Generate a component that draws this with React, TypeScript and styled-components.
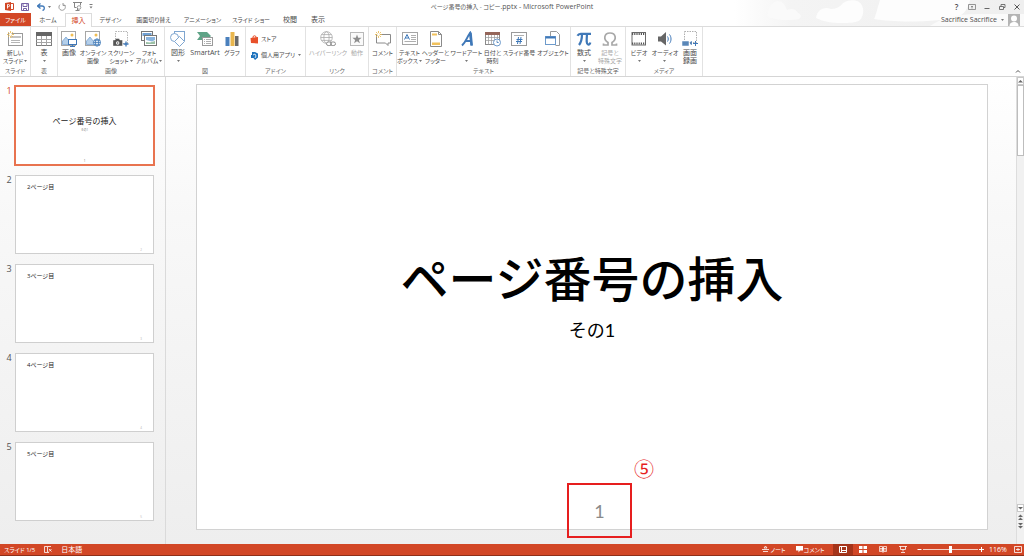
import React from "react";
import styled, { createGlobalStyle, css } from "styled-components";

const ACCENT = "#d24726";
const BLUE = "#3f78b8";
const GREY = "#7c7c7c";

const GlobalStyle = createGlobalStyle`
  *, *::before, *::after { box-sizing: border-box; }
  body {
    margin: 0;
    background: #ffffff;
    color: #4a4a4a;
    font-family: "Open Sans", "Noto Sans CJK JP", sans-serif;
    font-size: 7px;
    line-height: 8px;
    font-feature-settings: "palt", "kern";
  }
  button {
    font: inherit;
    font-feature-settings: inherit;
    color: inherit;
    margin: 0;
    padding: 0;
    border: 0;
    background: none;
  }
  h1, h2, p, ol { margin: 0; padding: 0; font-weight: 400; }
  svg { display: block; flex: none; }
`;

const Window = styled.div`
  min-height: 100vh;
  display: flex;
  flex-direction: column;
`;

/* ---------- title bar and tabs ---------- */

const Head = styled.header`
  position: relative;
  border-bottom: 1px solid #dcdcdc;
`;

const Clouds = styled.svg`
  position: absolute;
  top: 0;
  right: 0;
`;

const TitleBar = styled.div`
  position: relative;
  display: grid;
  grid-template-columns: 1fr auto 1fr;
  align-items: center;
  height: 13px;
`;

const QuickAccess = styled.div`
  display: flex;
  align-items: center;
  gap: 7px;
  padding-left: 5px;
`;

const WindowTitle = styled.h1`
  font-size: 7px;
  line-height: 12px;
  color: #555555;
  white-space: nowrap;
`;

const DocumentName = styled.span`
  font-size: 6px;
`;

const WindowButtons = styled.div`
  display: flex;
  justify-content: flex-end;
  align-items: center;
  gap: 7px;
  padding-right: 3px;
`;

const IconButton = styled.button`
  display: flex;
  align-items: center;
  justify-content: center;
`;

const HelpButton = styled(IconButton)`
  width: 9px;
  font-size: 8px;
  font-weight: 600;
`;

const TabRow = styled.nav`
  position: relative;
  display: flex;
  height: 13px;
`;

const Tab = styled.button<{ $w: number; $kind?: "file" | "active" }>`
  flex: none;
  width: ${(p) => p.$w}px;
  height: 13px;
  display: flex;
  align-items: center;
  justify-content: center;
  white-space: nowrap;
  font-size: ${(p) => (p.$w > 30 ? 6 : 7)}px;
  ${(p) =>
    p.$kind === "file" &&
    css`
      background: ${ACCENT};
      color: #ffffff;
    `}
  ${(p) =>
    p.$kind === "active" &&
    css`
      height: 14px;
      background: #ffffff;
      color: ${ACCENT};
      border: 1px solid #dcdcdc;
      border-bottom: 0;
    `}
`;

const Account = styled.button`
  margin-left: auto;
  display: flex;
  align-items: center;
  gap: 4px;
  padding-right: 4px;
`;

/* ---------- ribbon ---------- */

const Ribbon = styled.div`
  display: flex;
  height: 50px;
  border-bottom: 1px solid #d5d5d5;
  background: #ffffff;
`;

const GroupBox = styled.section<{ $w: number }>`
  flex: none;
  width: ${(p) => p.$w}px;
  display: flex;
  flex-direction: column;
  border-right: 1px solid #e2e2e2;
`;

const GroupTools = styled.div`
  flex: 1;
  display: flex;
  justify-content: center;
`;

const GroupName = styled.h2`
  height: 9px;
  font-size: 6px;
  line-height: 8px;
  text-align: center;
  white-space: nowrap;
  color: #666666;
`;

const ToolButton = styled.button<{ $w: number; $disabled?: boolean; $kana?: boolean }>`
  flex: none;
  width: ${(p) => p.$w}px;
  display: flex;
  flex-direction: column;
  align-items: center;
  padding-top: 4px;
  white-space: nowrap;
  font-size: ${(p) => (p.$kana ? 6 : 7)}px;
  color: ${(p) => (p.$disabled ? "#a8a8a8" : "#4a4a4a")};
`;

const ToolLabel = styled.span`
  margin-top: 2px;
  display: flex;
  flex-direction: column;
  align-items: center;
`;

const LabelLine = styled.span`
  display: flex;
  align-items: center;
  gap: 1px;
  height: 8px;
`;

const AddinList = styled.div`
  flex: 1;
  display: flex;
  flex-direction: column;
  gap: 6px;
  padding: 7px 4px 0;
`;

const AddinButton = styled.button`
  display: flex;
  align-items: center;
  gap: 2px;
  height: 10px;
  font-size: 6px;
  white-space: nowrap;
`;

const AddinArrow = styled.span`
  margin-left: auto;
`;

const Collapse = styled(IconButton)`
  margin-left: auto;
  align-self: flex-end;
  padding: 0 3px 3px 0;
`;

/* ---------- workspace ---------- */

const Workspace = styled.main`
  flex: 1;
  display: flex;
  background: linear-gradient(#ffffff, #f8f8f8 30%, #eeeeee);
`;

const Outline = styled.ol`
  flex: none;
  width: 166px;
  display: flex;
  flex-direction: column;
  gap: 10px;
  padding: 9px 11px 0 5px;
  list-style: none;
  border-right: 1px solid #dadada;
`;

const OutlineItem = styled.li<{ $selected?: boolean }>`
  display: flex;
  gap: 2px;
  font-size: 9px;
  line-height: 9px;
  color: ${(p) => (p.$selected ? ACCENT : "#555555")};
`;

const OutlineNumber = styled.span`
  width: 8px;
  text-align: center;
`;

const Thumb = styled.button<{ $selected?: boolean }>`
  flex: 1;
  height: 79px;
  display: flex;
  flex-direction: column;
  background: #ffffff;
  color: #222222;
  border: 1px solid #cfcfcf;
  ${(p) =>
    p.$selected &&
    css`
      border-color: #e8734f;
      box-shadow: 0 0 0 1px #e8734f;
    `}
`;

const ThumbTitle = styled.span`
  align-self: center;
  margin-top: 29px;
  font-family: "Noto Sans CJK JP", sans-serif;
  font-size: 8px;
  font-weight: 400;
  line-height: 10px;
  font-feature-settings: normal;
`;

const ThumbSub = styled.span`
  align-self: center;
  font-size: 3px;
  line-height: 6px;
  margin-top: 1px;
  color: #777777;
`;

const ThumbHeading = styled.span`
  align-self: flex-start;
  margin: 7px 0 0 11px;
  font-size: 6px;
  line-height: 9px;
`;

const ThumbPage = styled.span<{ $center?: boolean }>`
  margin-top: auto;
  align-self: ${(p) => (p.$center ? "center" : "flex-end")};
  padding: 0 11px;
  font-size: 3px;
  line-height: 6px;
  color: ${(p) => (p.$center ? "#555555" : "#b5b5b5")};
`;

const Editor = styled.div`
  flex: 1;
  padding: 7px 28px 14px 30px;
`;

const Slide = styled.article`
  position: relative;
  aspect-ratio: 792 / 446;
  display: flex;
  flex-direction: column;
  align-items: center;
  background: #ffffff;
  color: #000000;
  border: 1px solid #d2d2d2;
`;

const SlideTitle = styled.h2`
  margin-top: 161px;
  font-family: "Noto Sans CJK JP", sans-serif;
  font-size: 48px;
  font-weight: 500;
  line-height: 60px;
  font-feature-settings: normal;
`;

const SlideSubtitle = styled.p`
  margin-top: 12px;
  font-family: Lato, "Noto Sans CJK JP", sans-serif;
  font-size: 18px;
  font-weight: 400;
  line-height: 24px;
  font-feature-settings: normal;
`;

const PageNumber = styled.p`
  position: absolute;
  left: 370px;
  bottom: -9px;
  width: 65px;
  height: 55px;
  display: flex;
  align-items: center;
  justify-content: center;
  border: 2px solid #e61e1e;
  font-family: Lato, sans-serif;
  font-size: 18px;
  color: #8a8a8a;
`;

const Marker = styled.span`
  position: absolute;
  left: 437px;
  bottom: 48px;
  font-family: "Noto Sans CJK JP", sans-serif;
  font-size: 20px;
  font-weight: 400;
  line-height: 24px;
  color: #e61e1e;
`;

const ScrollBar = styled.div`
  flex: none;
  width: 8px;
  display: flex;
  flex-direction: column;
  padding-bottom: 14px;
  border-left: 1px solid #dddddd;
  background: #f1f1f1;
`;

const ScrollButton = styled(IconButton)<{ $plain?: boolean }>`
  height: ${(p) => (p.$plain ? 9 : 8)}px;
  border: ${(p) => (p.$plain ? "0" : "1px solid #c8c8c8")};
  background: ${(p) => (p.$plain ? "transparent" : "#ffffff")};
`;

const ScrollThumb = styled.div`
  height: 71px;
  border: 1px solid #bdbdbd;
  background: #ffffff;
`;

const ScrollTrack = styled.div`
  flex: 1;
`;

/* ---------- status bar ---------- */

const StatusBar = styled.footer`
  display: flex;
  align-items: center;
  height: 12px;
  border-bottom: 1px solid #8f2f18;
  background: ${ACCENT};
  color: #ffffff;
`;

const StatusLeft = styled.div`
  display: flex;
  align-items: center;
  gap: 9px;
  padding-left: 4px;
`;

const SlideCount = styled.span`
  font-size: 6px;
`;

const StatusRight = styled.div`
  margin-left: auto;
  display: flex;
  align-items: center;
  height: 11px;
`;

const StatusButton = styled.button<{ $w: number; $on?: boolean }>`
  width: ${(p) => p.$w}px;
  height: 11px;
  display: flex;
  align-items: center;
  justify-content: center;
  gap: 1px;
  font-size: 6px;
  white-space: nowrap;
  background: ${(p) => (p.$on ? "#a5341a" : "transparent")};
`;

const ZoomBox = styled.div`
  display: flex;
  align-items: center;
  padding-left: 4px;
`;

const ZoomRange = styled.input`
  appearance: none;
  width: 55px;
  height: 9px;
  margin: 0 1px;
  background: linear-gradient(#f5d0c6, #f5d0c6) center / 100% 1px no-repeat;
  &::-webkit-slider-thumb {
    appearance: none;
    width: 3px;
    height: 7px;
    background: #ffffff;
  }
`;

const ZoomValue = styled.span`
  width: 28px;
  text-align: center;
`;

/* ---------- icons ---------- */

const Icon = ({ w = 16, h = 16, children }: { w?: number; h?: number; children: React.ReactNode }) => (
  <svg width={w} height={h} viewBox={`0 0 ${w} ${h}`} fill="none" stroke={GREY} strokeWidth="1" aria-hidden="true">
    {children}
  </svg>
);

const Arrow = ({ color = "#777777" }: { color?: string }) => (
  <svg width="3" height="2" viewBox="0 0 3 2" aria-hidden="true">
    <path d="M0 0h3L1.500 2z" fill={color} />
  </svg>
);

const Spark = ({ x, y }: { x: number; y: number }) => (
  <g transform={`translate(${x} ${y})`} stroke="#e8b84a" strokeWidth=".8">
    <path d="M0-3.500V3.500M-3.500 0H3.500M-2.500-2.500L2.500 2.500M2.500-2.500L-2.500 2.500" />
    <circle r="1.400" fill="#fff" stroke="none" />
  </g>
);

const Landscape = () => (
  <>
    <rect x=".5" y=".5" width="14" height="14" stroke="#a6a6a6" fill="#fff" />
    <circle cx="11" cy="4" r="1.500" fill="#f0bd52" stroke="none" />
    <path d="M1.500 13.500V10L5 6l4 5 2-1.500 2.500 2v2z" fill="#b4cfea" stroke="#5b8fc7" strokeWidth=".6" />
  </>
);

const Globe = ({ x, y, r, color }: { x: number; y: number; r: number; color: string }) => (
  <g transform={`translate(${x} ${y})`} stroke={color} strokeWidth=".8">
    <circle r={r} fill="#fff" />
    <ellipse rx={r / 2.2} ry={r} />
    <path d={`M${-r} 0H${r}M${-r * 0.85} ${-r / 2}H${r * 0.85}M${-r * 0.85} ${r / 2}H${r * 0.85}`} />
  </g>
);

const icons: Record<string, React.ReactNode> = {
  newSlide: (
    <Icon>
      <rect x="1.500" y="2.500" width="14" height="12" fill="#fff" stroke="#9a9a9a" />
      <rect x="4" y="5" width="10" height="2" fill="#c4c4c4" stroke="none" />
      <path d="M4 9.500h9M4 11.500h9" stroke="#b5b5b5" />
      <Spark x={3.5} y={3.5} />
    </Icon>
  ),
  table: (
    <Icon>
      <rect x=".5" y="1.500" width="15" height="13" fill="#fff" />
      <path d="M0 1h16v4H0z" fill="#666" stroke="none" />
      <path d="M.5 8.500h15M.5 11.500h15M5.500 5v9.500M10.500 5v9.500" stroke="#a5a5a5" />
    </Icon>
  ),
  picture: (
    <Icon>
      <Landscape />
      <rect x="7.500" y="8.500" width="8" height="5" fill="#fff" stroke={BLUE} />
      <path d="M9 15.500h5M11.500 13.500v2" stroke={BLUE} />
    </Icon>
  ),
  online: (
    <Icon>
      <Landscape />
      <Globe x={12} y={11.5} r={3.6} color={BLUE} />
    </Icon>
  ),
  screenshot: (
    <Icon>
      <rect x="2.500" y=".5" width="12" height="12" stroke="#b5b5b5" strokeDasharray="1.500 1" />
      <path d="M0 9h2l1-1.500h3L7 9h2.500v6H0z" fill="#555" stroke="#fff" strokeWidth=".4" />
      <circle cx="4.700" cy="12" r="1.700" fill="#fff" stroke="none" />
      <circle cx="4.700" cy="12" r=".8" fill="#555" stroke="none" />
      <path d="M13 10.500v5M10.500 13h5" stroke={BLUE} strokeWidth="1.300" />
    </Icon>
  ),
  album: (
    <Icon>
      <rect x=".5" y=".5" width="11" height="9" fill="#fff" stroke="#777" />
      <path d="M1.500 2h9v3h-9z" fill="#6fa0d3" stroke="none" />
      <rect x="3.500" y="4.500" width="12" height="10" fill="#fff" stroke="#777" />
      <path d="M5 6h9v3l-3 1.500L5 9z" fill="#8ab4de" stroke="none" />
      <path d="M5 11l4 .5 5-1.500v3H5z" fill="#9bc0a5" stroke="none" />
    </Icon>
  ),
  shapes: (
    <Icon>
      <rect x="4.500" y=".5" width="10" height="9" fill="#fff" stroke="#7fa6d0" />
      <circle cx="4.500" cy="6.500" r="4" fill="#fff" stroke="#7fa6d0" />
      <path d="M9.500 5.500l5 5-5 5-5-5z" fill="#fff" stroke="#7fa6d0" />
    </Icon>
  ),
  smartart: (
    <Icon>
      <path d="M0 1h10l4 4-4 4H0l3-4z" fill="#5fa387" stroke="none" />
      <rect x="5.500" y="6.500" width="10" height="8" fill="#fff" stroke="#9a9a9a" />
      <path d="M7 8.500h1M9 8.500h5M7 10.500h1M9 10.500h5M7 12.500h1M9 12.500h5" stroke="#9a9a9a" strokeWidth=".8" />
    </Icon>
  ),
  chart: (
    <Icon>
      <path d="M1.500 6h4v9h-4z" fill="#4a80bd" stroke="none" />
      <path d="M6.500 1h4v14h-4z" fill="#e9b64e" stroke="none" />
      <path d="M11 5h3.500v10H11z" fill="#6a6a6a" stroke="none" />
    </Icon>
  ),
  link: (
    <Icon>
      <Globe x={6.5} y={6.5} r={5.8} color="#a9a9a9" />
      <rect x="6.500" y="11" width="5" height="3.500" rx="1.700" fill="#fff" stroke="#8f8f8f" />
      <rect x="10.500" y="11" width="5" height="3.500" rx="1.700" stroke="#8f8f8f" />
    </Icon>
  ),
  action: (
    <Icon>
      <rect x="1.500" y="1.500" width="13" height="13" stroke="#b9b9b9" fill="#fafafa" />
      <path d="M8 3.500l1.200 3.200 3.400.1-2.700 2.100 1 3.300L8 10.300l-2.900 1.900 1-3.300-2.700-2.100 3.400-.1z" fill="#8d8d8d" stroke="none" />
    </Icon>
  ),
  comment: (
    <Icon>
      <path d="M1.500 3.500h14v8.500h-2.500v2.500L10.500 12h-9z" fill="#fff" stroke="#8a8a8a" />
      <Spark x={3.5} y={3.5} />
    </Icon>
  ),
  textbox: (
    <Icon>
      <rect x=".5" y="1.500" width="15" height="12" fill="#fff" stroke="#a5a5a5" />
      <path d="M2.500 8.500L5 3.500l2.500 5M3.500 7h3" stroke={BLUE} />
      <path d="M9 4.500h5M9 6.500h5M9 8.500h5M2.500 10.500h11.500" stroke="#9a9a9a" strokeWidth=".8" />
    </Icon>
  ),
  header: (
    <Icon>
      <path d="M2.500.5h8l3 3v12h-11z" fill="#fff" stroke="#8a8a8a" />
      <path d="M10.500.5v3h3" stroke="#8a8a8a" />
      <path d="M4 2.500h5v2H4zM4 11.500h8v2.500H4z" fill="#f1c15c" stroke="none" />
    </Icon>
  ),
  wordart: (
    <Icon>
      <path d="M3 14.500C7 11 8 6 11 2l1.500 12.500M6 10h6" stroke={BLUE} strokeWidth="2" />
      <path d="M11.500 1.500l1.200 13" stroke={BLUE} strokeWidth="2.500" />
    </Icon>
  ),
  date: (
    <Icon>
      <rect x=".5" y="1.500" width="14" height="12" fill="#fff" stroke="#8a8a8a" />
      <path d="M0 1h15v3H0z" fill="#95665a" stroke="none" />
      <path d="M.5 6.500h14M.5 9.500h14M3.500 4v9.500M6.500 4v9.500M9.500 4v9.500M12.500 4v6" stroke="#9a9a9a" strokeWidth=".7" />
      <circle cx="12" cy="11.500" r="3.500" fill="#fff" stroke="#6d9acb" />
      <path d="M12 9.500v2h1.700" stroke={BLUE} strokeWidth=".8" />
    </Icon>
  ),
  number: (
    <Icon>
      <rect x=".5" y="1.500" width="15" height="13" fill="#fff" stroke="#9a9a9a" />
      <path d="M3 4.500h10" stroke="#b0b0b0" />
      <path d="M7.500 6l-1 7M10 6L9 13M5.500 8.500h6M5 10.500h6" stroke={BLUE} />
    </Icon>
  ),
  object: (
    <Icon>
      <path d="M5.500 5V.5h6l3 3v11h-4" fill="#fff" stroke="#9a9a9a" />
      <rect x=".5" y="5.500" width="10" height="8" fill="#fff" stroke="#6d9acb" />
      <path d="M.5 6.500h10" stroke={BLUE} strokeWidth="2" />
    </Icon>
  ),
  pi: (
    <Icon>
      <path d="M1.500 4.800C2.500 2.700 3.500 2.800 5 2.800h10M6 3c0 4-.5 8-3 11M11 3c-.4 6-.8 10 1 10.500 1.200.3 2-.5 2.300-2" stroke={BLUE} strokeWidth="2.200" />
    </Icon>
  ),
  omega: (
    <Icon>
      <path d="M1.500 12.500v1.500H6v-2.500C1 8.500 2 2 8 2s7 6.500 2 9.500V14h4.500v-1.500" stroke="#a8a8a8" strokeWidth="1.700" />
    </Icon>
  ),
  video: (
    <Icon>
      <rect x="1" y="1.500" width="13.500" height="12.500" fill="#fff" stroke="#6a6a6a" />
      <path d="M1 3h13.500M1 12.500h13.500" stroke="#555" strokeWidth="2" strokeDasharray="1.200 1" />
    </Icon>
  ),
  audio: (
    <Icon>
      <path d="M1 5.500h3L9 1v13.500L4 10.500H1z" fill="#666" stroke="none" />
      <path d="M10.500 5.500c1 1.500 1 3.500 0 5M12.500 3.500c2 2.500 2 6.500 0 9" stroke={BLUE} />
    </Icon>
  ),
  record: (
    <Icon>
      <rect x="2.500" y=".5" width="12" height="11" stroke="#b0b0b0" strokeDasharray="1.500 1" />
      <rect x="0" y="10" width="7" height="5" fill="#5a87b8" stroke="#fff" strokeWidth=".5" />
      <path d="M8 11l2-1v4l-2-1z" fill="#5a87b8" stroke="none" />
      <path d="M13.500 10v5M11 12.500h5" stroke={BLUE} />
    </Icon>
  ),
};

/* ---------- data ---------- */

type Tool = {
  icon: string;
  w: number;
  lines: string[];
  drop?: boolean;
  disabled?: boolean;
  kana?: boolean;
};
type Group = { name: string; w: number; tools: Tool[] };

const groupsBefore: Group[] = [
  { name: "スライド", w: 31, tools: [{ icon: "newSlide", w: 28, lines: ["新しい", "スライド"], drop: true, kana: true }] },
  { name: "表", w: 27, tools: [{ icon: "table", w: 24, lines: ["表", ""], drop: true }] },
  {
    name: "画像",
    w: 107,
    tools: [
      { icon: "picture", w: 20, lines: ["画像"] },
      { icon: "online", w: 28, lines: ["オンライン", "画像"], kana: true },
      { icon: "screenshot", w: 28, lines: ["スクリーン", "ショット"], drop: true, kana: true },
      { icon: "album", w: 28, lines: ["フォト", "アルバム"], drop: true, kana: true },
    ],
  },
  {
    name: "図",
    w: 81,
    tools: [
      { icon: "shapes", w: 22, lines: ["図形", ""], drop: true },
      { icon: "smartart", w: 32, lines: ["SmartArt"] },
      { icon: "chart", w: 22, lines: ["グラフ"], kana: true },
    ],
  },
];

const groupsAfter: Group[] = [
  {
    name: "リンク",
    w: 63,
    tools: [
      { icon: "link", w: 40, lines: ["ハイパーリンク"], disabled: true, kana: true },
      { icon: "action", w: 18, lines: ["動作"], disabled: true, kana: true },
    ],
  },
  { name: "コメント", w: 28, tools: [{ icon: "comment", w: 26, lines: ["コメント"], kana: true }] },
  {
    name: "テキスト",
    w: 174,
    tools: [
      { icon: "textbox", w: 24, lines: ["テキスト", "ボックス"], drop: true, kana: true },
      { icon: "header", w: 28, lines: ["ヘッダーと", "フッター"], kana: true },
      { icon: "wordart", w: 34, lines: ["ワードアート", ""], drop: true, kana: true },
      { icon: "date", w: 18, lines: ["日付と", "時刻"], kana: true },
      { icon: "number", w: 35, lines: ["スライド番号"], kana: true },
      { icon: "object", w: 33, lines: ["オブジェクト"], kana: true },
    ],
  },
  {
    name: "記号と特殊文字",
    w: 55,
    tools: [
      { icon: "pi", w: 24, lines: ["数式", ""], drop: true },
      { icon: "omega", w: 28, lines: ["記号と", "特殊文字"], disabled: true, kana: true },
    ],
  },
  {
    name: "メディア",
    w: 77,
    tools: [
      { icon: "video", w: 24, lines: ["ビデオ", ""], drop: true, kana: true },
      { icon: "audio", w: 28, lines: ["オーディオ", ""], drop: true, kana: true },
      { icon: "record", w: 22, lines: ["画面", "録画"] },
    ],
  },
];

const tabs: { label: string; w: number; kind?: "file" | "active" }[] = [
  { label: "ファイル", w: 31, kind: "file" },
  { label: "ホーム", w: 34 },
  { label: "挿入", w: 27, kind: "active" },
  { label: "デザイン", w: 37 },
  { label: "画面切り替え", w: 49 },
  { label: "アニメーション", w: 49 },
  { label: "スライド ショー", w: 48 },
  { label: "校閲", w: 30 },
  { label: "表示", w: 26 },
];

const RibbonGroup = ({ group }: { group: Group }) => (
  <GroupBox $w={group.w}>
    <GroupTools>
      {group.tools.map((t) => (
        <ToolButton key={t.icon} type="button" $w={t.w} $disabled={t.disabled} $kana={t.kana}>
          {icons[t.icon]}
          <ToolLabel>
            {t.lines.map((line, i) => (
              <LabelLine key={i}>
                {line}
                {t.drop && i === t.lines.length - 1 && <Arrow />}
              </LabelLine>
            ))}
          </ToolLabel>
        </ToolButton>
      ))}
    </GroupTools>
    <GroupName>{group.name}</GroupName>
  </GroupBox>
);

export default function App() {
  return (
    <>
      <GlobalStyle />
      <Window>
        <Head>
          <Clouds width="290" height="26" viewBox="0 0 290 26" aria-hidden="true">
            <defs>
              <linearGradient id="sky" x1="0" x2="1" y1="0" y2="0">
                <stop offset="0" stopColor="#ffffff" />
                <stop offset=".2" stopColor="#f4f4f4" />
                <stop offset="1" stopColor="#efefef" />
              </linearGradient>
            </defs>
            <rect width="290" height="26" fill="url(#sky)" />
            <path d="M34 14c0-6 3-11 9-13 7 0 8 5 10 9 5-2 9-1 11 3 3 1 4 4 1 6-8 2-22 1-27-1-3 0-5-2-4-4z" fill="#fafafa" />
            <path d="M82 18c1-8 8-12 15-9 5 0 9-2 12-6 4-3 12-4 16-1 6 4 5 14 1 18-4 3-12 3-18 3-10 0-18-1-26-5z" fill="#fdfdfd" />
            <path d="M140 19c2-4 4-13 6-19h90c-2 9-6 14-12 17-16 5-64 6-84 2z" fill="#fdfdfd" />
            <path d="M196 26c10-7 24-12 48-12h46v12z" fill="#fafafa" />
          </Clouds>
          <TitleBar>
            <QuickAccess>
              <Icon w={9} h={9}>
                <path d="M0 1l6-1v9L0 8z" fill={ACCENT} stroke="none" />
                <path d="M6 1.500h2.500v6H6" stroke={ACCENT} />
                <path d="M2.500 6.500v-4h1a1 1 0 010 2.200h-1" stroke="#fff" strokeWidth=".9" />
              </Icon>
              <IconButton type="button" aria-label="上書き保存">
                <Icon w={9} h={8}>
                  <path d="M.5.5h7v7h-7zM2 .5v3h4v-3M2.500 7.500v-2h3v2" stroke="#7562a5" />
                </Icon>
              </IconButton>
              <IconButton type="button" aria-label="元に戻す">
                <Icon w={14} h={8}>
                  <path d="M3.500.5l-3 2.500 3 2.500M.5 3H5c3 0 3 4 .5 4.500" stroke={BLUE} strokeWidth="1.300" />
                  <path d="M11 3h3l-1.500 2z" fill="#777" stroke="none" />
                </Icon>
              </IconButton>
              <IconButton type="button" aria-label="繰り返し">
                <Icon w={8} h={8}>
                  <path d="M5.500 1.200A3.200 3.200 0 112 1.700M5 0v2.500h2.500" stroke="#9a9a9a" />
                </Icon>
              </IconButton>
              <IconButton type="button" aria-label="スライド ショーの開始">
                <Icon w={9} h={9}>
                  <path d="M0 .5h9M1.500.5v5h2M7.500.5v3M2.500 8.500h4M4.500 6v2" stroke="#858585" />
                  <circle cx="6" cy="5.500" r="1.800" stroke="#858585" strokeWidth=".8" />
                </Icon>
              </IconButton>
              <IconButton type="button" aria-label="クイック アクセスのカスタマイズ">
                <Icon w={4} h={5}>
                  <path d="M.5.5h3" />
                  <path d="M.5 2.500h3L2 4.500z" fill="#777" stroke="none" />
                </Icon>
              </IconButton>
            </QuickAccess>
            <WindowTitle>
              <DocumentName>ページ番号の挿入 - コピー</DocumentName>.pptx - Microsoft PowerPoint
            </WindowTitle>
            <WindowButtons>
              <HelpButton type="button" aria-label="ヘルプ">?</HelpButton>
              <IconButton type="button" aria-label="リボンの表示オプション">
                <Icon w={8} h={6}>
                  <path d="M.5.500h7v5h-7zM4 4.500V2M3 3l1-1 1 1" strokeWidth=".8" />
                </Icon>
              </IconButton>
              <IconButton type="button" aria-label="最小化">
                <Icon w={8} h={6}>
                  <path d="M1.500 4.500h5" stroke="#666" />
                </Icon>
              </IconButton>
              <IconButton type="button" aria-label="元に戻す (縮小)">
                <Icon w={8} h={6}>
                  <path d="M1.500 2.500h4v3h-4zM3 2.500v-2h4v3H5.500" stroke="#666" strokeWidth=".9" />
                </Icon>
              </IconButton>
              <IconButton type="button" aria-label="閉じる">
                <Icon w={8} h={6}>
                  <path d="M1.500.5l5 5M6.500.5l-5 5" stroke="#555" />
                </Icon>
              </IconButton>
            </WindowButtons>
          </TitleBar>
          <TabRow>
            {tabs.map((t) => (
              <Tab key={t.label} type="button" $w={t.w} $kind={t.kind}>
                {t.label}
              </Tab>
            ))}
            <Account type="button">
              Sacrifice Sacrifice
              <Arrow />
              <Icon w={12} h={12}>
                <rect width="12" height="12" fill="#b4b4b4" stroke="none" />
                <circle cx="6" cy="4.500" r="3" fill="#fff" stroke="none" />
                <path d="M1.500 12c0-3 2-4 4.500-4s4.500 1 4.500 4z" fill="#fff" stroke="none" />
              </Icon>
            </Account>
          </TabRow>
        </Head>

        <Ribbon>
          {groupsBefore.map((g) => (
            <RibbonGroup key={g.name} group={g} />
          ))}
          <GroupBox $w={60}>
            <AddinList>
              <AddinButton type="button">
                <Icon w={9} h={9}>
                  <path d="M.5 3L8 2v6.500L1 8z" fill="#e8502a" stroke="none" />
                  <path d="M3 3V1.500Q4.500 0 6 1.500V3" stroke="#e8502a" />
                </Icon>
                ストア
              </AddinButton>
              <AddinButton type="button">
                <Icon w={9} h={9}>
                  <path d="M2 1h3l3 1.500v4L5 9 3.500 7H1V4h1z" fill="#1f73bd" stroke="none" />
                  <path d="M3 4l2-1 1 2-1 2" stroke="#fff" strokeWidth=".8" />
                </Icon>
                個人用アプリ
                <AddinArrow>
                  <Arrow />
                </AddinArrow>
              </AddinButton>
            </AddinList>
            <GroupName>アドイン</GroupName>
          </GroupBox>
          {groupsAfter.map((g) => (
            <RibbonGroup key={g.name} group={g} />
          ))}
          <Collapse type="button" aria-label="リボンを折りたたむ">
            <Icon w={6} h={4}>
              <path d="M1 3.500l2-2 2 2" stroke="#555" />
            </Icon>
          </Collapse>
        </Ribbon>

        <Workspace>
          <Outline>
            <OutlineItem $selected>
              <OutlineNumber>1</OutlineNumber>
              <Thumb type="button" $selected>
                <ThumbTitle>ページ番号の挿入</ThumbTitle>
                <ThumbSub>その1</ThumbSub>
                <ThumbPage $center>1</ThumbPage>
              </Thumb>
            </OutlineItem>
            {[2, 3, 4, 5].map((n) => (
              <OutlineItem key={n}>
                <OutlineNumber>{n}</OutlineNumber>
                <Thumb type="button">
                  <ThumbHeading>{n}ページ目</ThumbHeading>
                  <ThumbPage>{n}</ThumbPage>
                </Thumb>
              </OutlineItem>
            ))}
          </Outline>
          <Editor>
            <Slide>
              <SlideTitle>ページ番号の挿入</SlideTitle>
              <SlideSubtitle>その1</SlideSubtitle>
              <Marker>⑤</Marker>
              <PageNumber>1</PageNumber>
            </Slide>
          </Editor>
          <ScrollBar>
            <ScrollButton type="button" aria-label="上へ">
              <Icon w={5} h={4}>
                <path d="M0 3.500h5L2.500 1z" fill="#666" stroke="none" />
              </Icon>
            </ScrollButton>
            <ScrollThumb />
            <ScrollTrack />
            <ScrollButton type="button" aria-label="下へ">
              <Icon w={5} h={4}>
                <path d="M0 1h5L2.500 3.500z" fill="#666" stroke="none" />
              </Icon>
            </ScrollButton>
            <ScrollButton type="button" $plain aria-label="前のスライド">
              <Icon w={5} h={6}>
                <path d="M0 3h5L2.500.5zM0 6h5L2.500 3.500z" fill="#666" stroke="none" />
              </Icon>
            </ScrollButton>
            <ScrollButton type="button" $plain aria-label="次のスライド">
              <Icon w={5} h={6}>
                <path d="M0 0h5L2.500 2.500zM0 3h5L2.500 5.500z" fill="#666" stroke="none" />
              </Icon>
            </ScrollButton>
          </ScrollBar>
        </Workspace>

        <StatusBar>
          <StatusLeft>
            <SlideCount>スライド 1/5</SlideCount>
            <Icon w={8} h={7}>
              <path d="M.5.5h3v6h-3zM3.500.5H7M3.500 6.500H5M5 3l2.500 2.500M7.500 3L5 5.500" stroke="#fff" strokeWidth=".8" />
            </Icon>
            <span>日本語</span>
          </StatusLeft>
          <StatusRight>
            <StatusButton type="button" $w={26}>
              <Icon w={7} h={7}>
                <path d="M3.500 0L2 2h3zM0 3.500h7M1 5.500h5" stroke="#fff" strokeWidth=".8" />
              </Icon>
              ノート
            </StatusButton>
            <StatusButton type="button" $w={46}>
              <Icon w={7} h={7}>
                <path d="M0 0h7v4.500H4L2.500 6.500v-2H0z" fill="#fff" stroke="none" />
              </Icon>
              コメント
            </StatusButton>
            <StatusButton type="button" $w={20} $on aria-label="標準">
              <Icon w={8} h={7}>
                <path d="M.5.500h7v6h-7zM2.500.5v6M2.500 4.500h5" stroke="#fff" />
              </Icon>
            </StatusButton>
            <StatusButton type="button" $w={20} aria-label="スライド一覧">
              <Icon w={8} h={7}>
                <path d="M0 0h3.500v3H0zM4.500 0H8v3H4.500zM0 4h3.500v3H0zM4.500 4H8v3H4.500z" fill="#fff" stroke="none" />
              </Icon>
            </StatusButton>
            <StatusButton type="button" $w={20} aria-label="閲覧表示">
              <Icon w={8} h={7}>
                <path d="M.5.500h3v5h-3zM4.500.5h3v5h-3zM4 1v6M1 2.500h6M1 4h6" stroke="#fff" strokeWidth=".7" />
              </Icon>
            </StatusButton>
            <StatusButton type="button" $w={20} aria-label="スライド ショー">
              <Icon w={8} h={7}>
                <path d="M0 .5h8M1.500.5v3h5v-3M4 3.500v2M2 6.500h4" stroke="#fff" strokeWidth=".8" />
              </Icon>
            </StatusButton>
            <ZoomBox>
              <IconButton type="button" aria-label="縮小">
                <Icon w={5} h={5}>
                  <path d="M.5 2.500h4" stroke="#fff" />
                </Icon>
              </IconButton>
              <ZoomRange type="range" min="10" max="400" defaultValue="205" aria-label="ズーム" />
              <IconButton type="button" aria-label="拡大">
                <Icon w={5} h={5}>
                  <path d="M0 2.500h5M2.500 0v5" stroke="#fff" />
                </Icon>
              </IconButton>
              <ZoomValue>116%</ZoomValue>
            </ZoomBox>
            <StatusButton type="button" $w={12} aria-label="ウィンドウに合わせる">
              <Icon w={8} h={7}>
                <path d="M.5.500h7v6h-7zM2 3.500h4M4 2v3" stroke="#fff" strokeWidth=".8" />
              </Icon>
            </StatusButton>
          </StatusRight>
        </StatusBar>
      </Window>
    </>
  );
}
